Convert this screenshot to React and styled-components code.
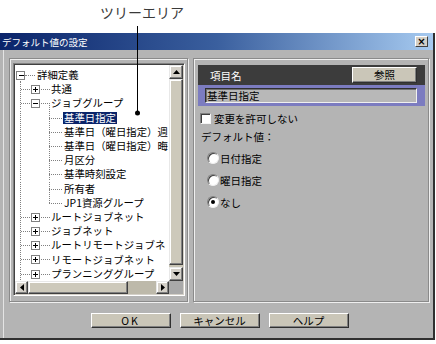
import React from 'react';
import styled, { createGlobalStyle } from 'styled-components';

const FONT = `"Noto Sans CJK JP", "Noto Sans", sans-serif`;

const Global = createGlobalStyle`
  html, body { margin: 0; padding: 0; background: #fff; }
  body { width: 436px; height: 344px; overflow: hidden; font-family: ${FONT}; }
`;

const Page = styled.div`
  position: relative;
  width: 436px;
  height: 344px;
`;

const Caption = styled.div`
  height: 33px;
  box-sizing: border-box;
  padding: 4px 0 0 100px;
  font-size: 14px;
  line-height: 16px;
  color: #3a3a3a;
`;

const Callout = styled.svg`
  position: absolute;
  left: 0;
  top: 0;
  pointer-events: none;
`;

const Dialog = styled.div`
  width: 435px;
  height: 307px;
  box-sizing: border-box;
  background: #b4b4b4;
  border-right: 2px solid #303030;
  border-bottom: 2px solid #303030;
  display: flex;
  flex-direction: column;
`;

const TitleBar = styled.div`
  height: 17px;
  flex: none;
  display: flex;
  align-items: center;
  justify-content: space-between;
  padding: 0 5px 0 2px;
  background: linear-gradient(to right, #0a246a 0%, #3a5f9e 50%, #a6caf0 100%);
`;

const TitleText = styled.span`
  color: #fff;
  font-size: 9.5px;
  line-height: 12px;
`;

const CloseBtn = styled.div`
  width: 13px;
  height: 11px;
  box-sizing: border-box;
  background: #d4d0c8;
  border: 1px solid;
  border-color: #fff #404040 #404040 #fff;
  display: flex;
  align-items: center;
  justify-content: center;
  font-size: 10px;
  font-weight: bold;
  line-height: 9px;
  color: #000;
  font-family: "DejaVu Sans", sans-serif;
`;

const Body = styled.div`
  flex: 1;
  display: flex;
  flex-direction: column;
  padding: 8px 3px 0 9px;
  box-shadow: inset 3px 0 0 #b4b4b4, inset 4px 0 0 #e4e4e4;
`;

const Panels = styled.div`
  display: flex;
  gap: 5px;
  height: 244px;
`;

const Group = styled.div`
  box-sizing: border-box;
  height: 244px;
  width: ${p => p.$w}px;
  border: 1px solid #8a8a8a;
  box-shadow: inset 1px 1px 0 #efefef, 1px 1px 0 #efefef;
  padding: ${p => p.$pad};
  display: flex;
  flex-direction: column;
`;

const Sunken = styled.div`
  width: 172px;
  height: 233px;
  box-sizing: border-box;
  border: 1px solid;
  border-color: #808080 #fff #fff #808080;
  box-shadow: inset 1px 1px 0 #404040, inset -1px -1px 0 #d4d0c8;
  padding: 1px;
  display: grid;
  grid-template-columns: 154px 14px;
  grid-template-rows: 216px 13px;
`;

const TreePane = styled.div`
  background: #fff;
  overflow: hidden;
  padding-top: 3px;
  box-sizing: border-box;
  font-size: 10.4px;
  color: #000;
`;

const Row = styled.div`
  display: flex;
  align-items: center;
  height: 14.2px;
  white-space: nowrap;
`;

const Guide = styled.svg`
  flex: none;
  display: block;
`;

const Label = styled.span`
  padding: 0 1px;
  line-height: 12px;
  background: ${p => (p.$sel ? '#0a246a' : 'transparent')};
  color: ${p => (p.$sel ? '#fff' : '#000')};
`;

const VScroll = styled.div`
  background: #c8c4b4;
  display: flex;
  flex-direction: column;
`;

const HScroll = styled.div`
  background: #bdb9aa;
  display: flex;
  flex-direction: row;
`;

const ScrollBtn = styled.div`
  flex: none;
  width: ${p => p.$w}px;
  height: ${p => p.$h}px;
  box-sizing: border-box;
  background: #d4d0c8;
  border: 1px solid;
  border-color: #e8e8e8 #404040 #404040 #e8e8e8;
  box-shadow: inset -1px -1px 0 #808080, inset 1px 1px 0 #fff;
  display: flex;
  align-items: center;
  justify-content: center;
`;

const Thumb = styled.div`
  box-sizing: border-box;
  background: #cdc9bb;
  border: 1px solid;
  border-color: #e8e8e8 #404040 #404040 #e8e8e8;
  box-shadow: inset -1px -1px 0 #808080, inset 1px 1px 0 #fff;
  ${p => (p.$vertical ? 'flex: 1; margin-bottom: 2px;' : 'width: 100px;')}
`;

const Track = styled.div`
  flex: 1;
`;

const Corner = styled.div`
  background: #a9a9a9;
`;

const Header = styled.div`
  height: 20px;
  flex: none;
  background: #3c3c3c;
  display: flex;
  align-items: center;
  justify-content: space-between;
  padding: 0 8px 0 12px;
  color: #fff;
  font-size: 10.5px;
`;

const PushButton = styled.div`
  width: ${p => p.$w}px;
  height: ${p => p.$h}px;
  box-sizing: border-box;
  background: #cac6b8;
  border: 1px solid;
  border-color: #fff #303030 #303030 #fff;
  box-shadow: inset -1px -1px 0 #808080;
  display: flex;
  align-items: center;
  justify-content: center;
  color: #000;
  font-size: 10.5px;
  line-height: 12px;
  letter-spacing: ${p => p.$ls || 0}px;
`;

const ValueRow = styled.div`
  height: 21px;
  flex: none;
  box-sizing: border-box;
  background: #7c7cc0;
  padding: 3px 8px 0 7px;
`;

const ValueField = styled.div`
  height: 15px;
  box-sizing: border-box;
  background: #b8b8b8;
  border: 1px solid;
  border-color: #303030 #f0f0f0 #f0f0f0 #303030;
  box-shadow: inset 1px 1px 0 #707070;
  padding-left: 1px;
  font-size: 10.5px;
  line-height: 13px;
  color: #000;
`;

const Options = styled.div`
  display: flex;
  flex-direction: column;
  padding-left: 2px;
  font-size: 10.5px;
  color: #000;
`;

const CheckRow = styled.div`
  display: flex;
  align-items: center;
  gap: 3px;
  height: 12px;
  margin-top: 6px;
`;

const CheckBox = styled.div`
  width: 11px;
  height: 11px;
  box-sizing: border-box;
  background: #fff;
  border: 1px solid;
  border-color: #808080 #f4f4f4 #f4f4f4 #808080;
  box-shadow: inset 1px 1px 0 #404040;
`;

const FieldLabel = styled.div`
  margin-top: 7px;
  padding-left: 1px;
  height: 12px;
  line-height: 12px;
`;

const RadioGroup = styled.div`
  display: flex;
  flex-direction: column;
  gap: 10px;
  margin-top: 9px;
  padding-left: 7px;
`;

const RadioRow = styled.div`
  display: flex;
  align-items: center;
  gap: 1px;
  height: 12px;
`;

const Radio = styled.div`
  width: 12px;
  height: 12px;
  box-sizing: border-box;
  border-radius: 50%;
  background: #fff;
  border: 1px solid;
  border-color: #808080 #f0f0f0 #f0f0f0 #808080;
  box-shadow: inset 1px 1px 0 #404040;
  display: flex;
  align-items: center;
  justify-content: center;
  &::after {
    content: '';
    width: 4px;
    height: 4px;
    border-radius: 50%;
    background: ${p => (p.$on ? '#000' : 'transparent')};
  }
`;

const ButtonBar = styled.div`
  display: flex;
  justify-content: center;
  gap: 9px;
  margin-top: 11px;
`;

const H = 14.2;
const MID = 7.5;
const dot = { stroke: '#808080', strokeWidth: 1, strokeDasharray: '1 1', shapeRendering: 'crispEdges' };

function Box({ cx, open }) {
  return (
    <g shapeRendering="crispEdges">
      <rect x={cx - 4} y={MID - 4} width={8} height={8} fill="#fff" stroke="#808080" />
      <line x1={cx - 2} y1={MID} x2={cx + 3} y2={MID} stroke="#000" />
      {!open && <line x1={cx + 0.5} y1={MID - 2.5} x2={cx + 0.5} y2={MID + 2.5} stroke="#000" />}
    </g>
  );
}

function TreeGuide({ row }) {
  if (row.level === 0) {
    return (
      <Guide width={21} height={H} viewBox={`0 0 21 ${H}`}>
        <line x1={5.5} y1={MID + 4} x2={5.5} y2={H} style={dot} />
        <line x1={9.5} y1={MID} x2={20} y2={MID} style={dot} />
        <Box cx={5.5} open />
      </Guide>
    );
  }
  if (row.level === 1) {
    return (
      <Guide width={35} height={H} viewBox={`0 0 35 ${H}`}>
        <line x1={5.5} y1={0} x2={5.5} y2={H} style={dot} />
        <line x1={5.5} y1={MID} x2={16} y2={MID} style={dot} />
        <line x1={24.5} y1={MID} x2={35} y2={MID} style={dot} />
        {row.open && <line x1={34.5} y1={MID} x2={34.5} y2={H} style={dot} />}
        <Box cx={20.5} open={row.open} />
      </Guide>
    );
  }
  return (
    <Guide width={48} height={H} viewBox={`0 0 48 ${H}`}>
      <line x1={5.5} y1={0} x2={5.5} y2={H} style={dot} />
      <line x1={34.5} y1={0} x2={34.5} y2={row.last ? MID : H} style={dot} />
      <line x1={34.5} y1={MID} x2={47} y2={MID} style={dot} />
    </Guide>
  );
}

const rows = [
  { level: 0, label: '詳細定義' },
  { level: 1, label: '共通' },
  { level: 1, label: 'ジョブグループ', open: true },
  { level: 2, label: '基準日指定', sel: true },
  { level: 2, label: '基準日（曜日指定）週' },
  { level: 2, label: '基準日（曜日指定）晦' },
  { level: 2, label: '月区分' },
  { level: 2, label: '基準時刻設定' },
  { level: 2, label: '所有者' },
  { level: 2, label: 'JP1資源グループ', last: true },
  { level: 1, label: 'ルートジョブネット' },
  { level: 1, label: 'ジョブネット' },
  { level: 1, label: 'ルートリモートジョブネ' },
  { level: 1, label: 'リモートジョブネット' },
  { level: 1, label: 'プランニンググループ' },
];

function Arrow({ dir }) {
  const pts = {
    up: '0,4 7,4 3.5,0',
    down: '0,0 7,0 3.5,4',
    left: '4,0 4,7 0,3.5',
    right: '0,0 0,7 4,3.5',
  }[dir];
  const vertical = dir === 'up' || dir === 'down';
  return (
    <svg width={vertical ? 7 : 4} height={vertical ? 4 : 7} viewBox={vertical ? '0 0 7 4' : '0 0 4 7'}>
      <polygon points={pts} fill="#000" />
    </svg>
  );
}

export default function App() {
  return (
    <Page>
      <Global />
      <Caption>ツリーエリア</Caption>
      <Dialog>
        <TitleBar>
          <TitleText>デフォルト値の設定</TitleText>
          <CloseBtn>×</CloseBtn>
        </TitleBar>
        <Body>
          <Panels>
            <Group $w={179} $pad="4px 3px">
              <Sunken>
                <TreePane>
                  {rows.map((r, i) => (
                    <Row key={i}>
                      <TreeGuide row={r} />
                      <Label $sel={r.sel}>{r.label}</Label>
                    </Row>
                  ))}
                </TreePane>
                <VScroll>
                  <ScrollBtn $w={14} $h={14}><Arrow dir="up" /></ScrollBtn>
                  <Thumb $vertical />
                  <ScrollBtn $w={14} $h={14}><Arrow dir="down" /></ScrollBtn>
                </VScroll>
                <HScroll>
                  <ScrollBtn $w={13} $h={13}><Arrow dir="left" /></ScrollBtn>
                  <Thumb />
                  <Track />
                  <ScrollBtn $w={13} $h={13}><Arrow dir="right" /></ScrollBtn>
                </HScroll>
                <Corner />
              </Sunken>
            </Group>
            <Group $w={236} $pad="6px 3px 0 4px">
              <Header>
                <span>項目名</span>
                <PushButton $w={65} $h={16}>参照</PushButton>
              </Header>
              <ValueRow>
                <ValueField>基準日指定</ValueField>
              </ValueRow>
              <Options>
                <CheckRow>
                  <CheckBox />
                  <span>変更を許可しない</span>
                </CheckRow>
                <FieldLabel>デフォルト値：</FieldLabel>
                <RadioGroup>
                  <RadioRow><Radio /><span>日付指定</span></RadioRow>
                  <RadioRow><Radio /><span>曜日指定</span></RadioRow>
                  <RadioRow><Radio $on /><span>なし</span></RadioRow>
                </RadioGroup>
              </Options>
            </Group>
          </Panels>
          <ButtonBar>
            <PushButton $w={80} $h={15} $ls={2}>OK</PushButton>
            <PushButton $w={80} $h={15}>キャンセル</PushButton>
            <PushButton $w={80} $h={15}>ヘルプ</PushButton>
          </ButtonBar>
        </Body>
      </Dialog>
      <Callout width={436} height={344} viewBox="0 0 436 344">
        <line x1={137.5} y1={26} x2={137.5} y2={113} stroke="#000" strokeWidth={1} />
        <circle cx={137.5} cy={113} r={2.5} fill="#000" />
      </Callout>
    </Page>
  );
}
